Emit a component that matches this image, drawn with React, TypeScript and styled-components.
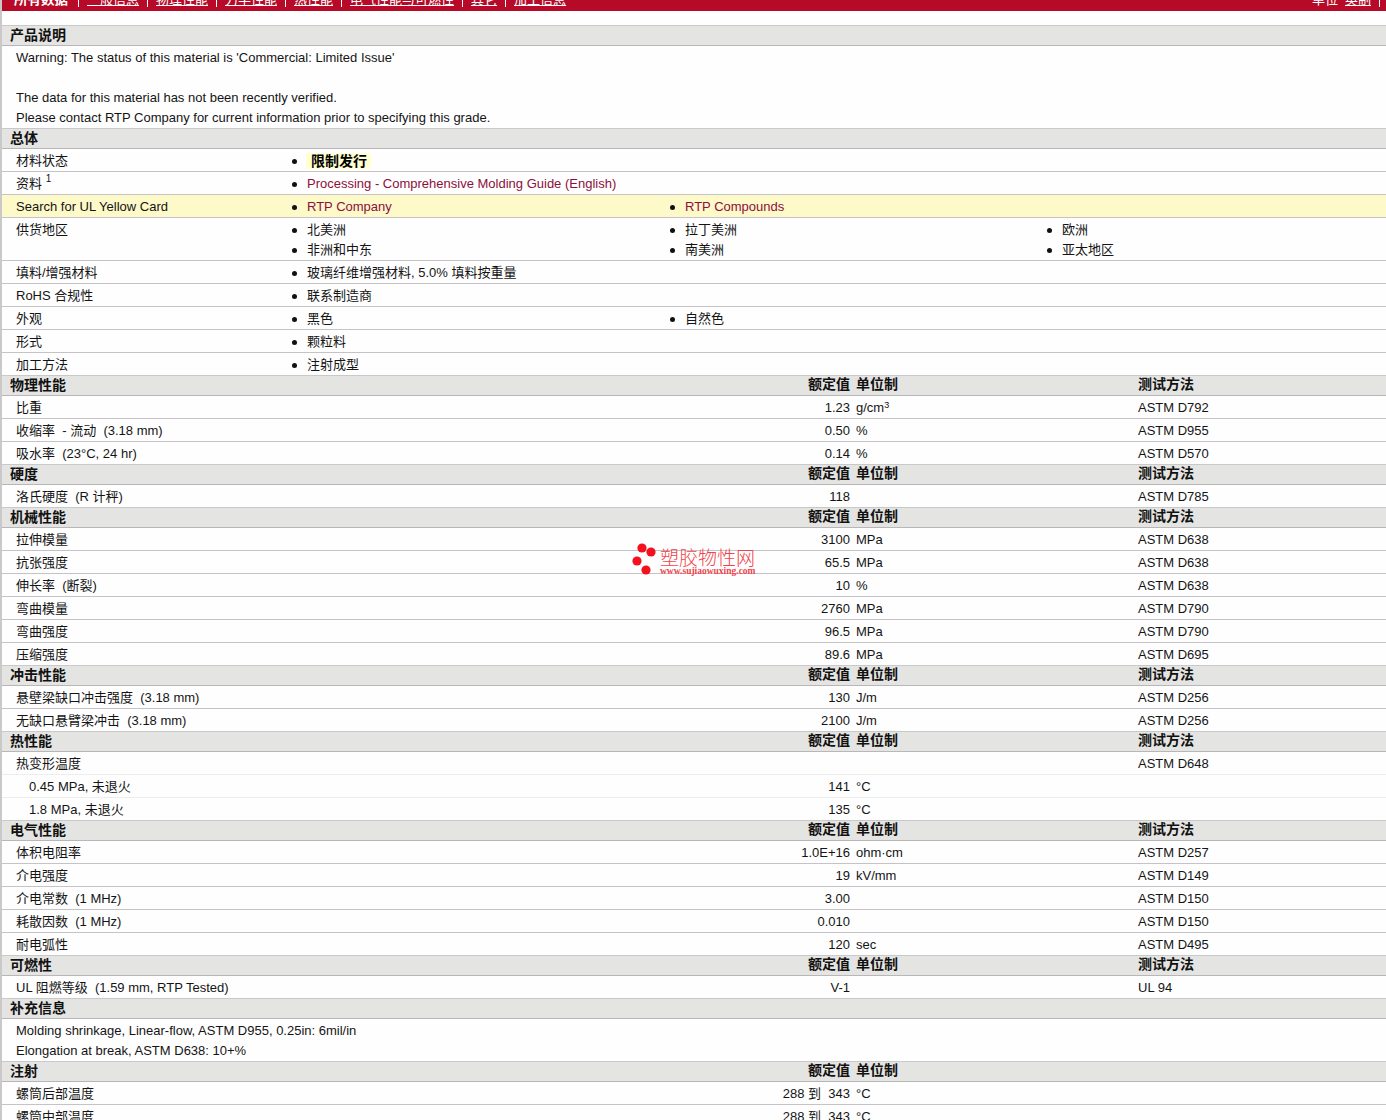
import React from "react";
import styled, { createGlobalStyle } from "styled-components";

const Global = createGlobalStyle`
  html, body { margin: 0; padding: 0; background: #fefefe; }
  body { font-family: "Liberation Sans", "Noto Sans CJK SC", sans-serif; font-size: 13px; color: #141414; overflow: hidden; }
`;

const Page = styled.div`
  width: 1386px;
  height: 1120px;
  overflow: hidden;
  position: relative;
  box-sizing: border-box;
  border-left: 2px solid #c9c9c9;
`;
const TopBar = styled.nav`
  height: 11px;
  background: #b70a28;
  color: #fff;
  display: flex;
  justify-content: space-between;
  align-items: flex-end;
  overflow: hidden;
  padding: 0 0 0 12px;
`;
const NavGroup = styled.div`
  display: flex;
  align-items: center;
  flex: none;
  height: 14px;
  line-height: 14px;
  padding-bottom: 4px;
`;
const NavAll = styled.b`
  font-size: 13.5px;
`;
const NavLink = styled.span`
  text-decoration: underline;
  white-space: nowrap;
`;
const NavUnitLink = styled(NavLink)`
  margin-left: 7px;
`;
const NavPlain = styled.span`
  white-space: nowrap;
`;
const NavSep = styled.i<{ $first?: boolean; $end?: boolean }>`
  display: block;
  width: 1px;
  height: 14px;
  background: #fff;
  margin: 0 ${(p) => (p.$end ? 6 : 8)}px 0 ${(p) => (p.$first ? 10 : 8)}px;
`;
const Spacer = styled.div`
  height: 14px;
`;
const Section = styled.div`
  height: 19px;
  background: #e4e4e2;
  border-top: 1px solid #c9c9c9;
  border-bottom: 1px solid #b9b6b8;
  display: grid;
  grid-template-columns: 840px 276px 1fr;
  column-gap: 6px;
  padding-left: 8px;
  font-size: 14px;
  font-weight: 700;
  line-height: 18px;
  color: #111;
`;
const PlainSection = styled(Section)`
  display: block;
`;
const HeadCols = styled.span`
  display: flex;
  justify-content: space-between;
`;
const HeadVal = styled.span`
  line-height: 16px;
`;
const Notes = styled.div`
  padding: 2px 14px 0;
  line-height: 20px;
`;
const NoteLine = styled.div`
  height: 20px;
`;
const Row = styled.div<{ $light?: boolean; $last?: boolean }>`
  display: grid;
  grid-template-columns: 834px 276px 1fr;
  column-gap: 6px;
  padding: 2px 0 0 14px;
  height: 20px;
  line-height: 20px;
  white-space: pre;
  border-bottom: ${(p) => (p.$last ? "none" : `1px solid ${p.$light ? "#ededed" : "#c6c3c8"}`)};
`;
const Val = styled.span`
  display: flex;
  justify-content: space-between;
`;
const ValLabel = styled.span<{ $indent?: boolean }>`
  padding-left: ${(p) => (p.$indent ? 13 : 0)}px;
`;
const Sup = styled.sup`
  font-size: 10px;
  line-height: 0;
  vertical-align: 6px;
`;
const UnitSup = styled(Sup)`
  font-size: 9px;
  vertical-align: 4px;
`;
const ListRow = styled.div<{ $last?: boolean; $hl?: boolean; $lines?: number }>`
  display: grid;
  grid-template-columns: 276px 378px 377px 1fr;
  grid-auto-rows: 20px;
  padding: 2px 0 0 14px;
  height: ${(p) => (p.$lines || 1) * 20}px;
  line-height: 20px;
  white-space: nowrap;
  background: ${(p) => (p.$hl ? "#fdf9c9" : "transparent")};
  border-bottom: ${(p) => (p.$last ? "none" : "1px solid #c6c3c8")};
`;
const ListLabel = styled.span`
  grid-row: 1 / span 2;
`;
const Item = styled.span<{ $col?: number }>`
  display: flex;
  align-items: center;
  ${(p) => (p.$col ? `grid-row: 2; grid-column: ${p.$col};` : "")}
  &::before {
    content: "";
    width: 5px;
    height: 5px;
    border-radius: 50%;
    background: #111;
    margin-right: 10px;
    flex: none;
  }
`;
const RedLink = styled.span`
  color: #8c0f3c;
`;
const Badge = styled.b`
  background: #ffffd0;
  padding: 0 4px 0 5px;
  margin-left: -1px;
  font-size: 14px;
  line-height: 16px;
  color: #000;
`;
const Mark = styled.div`
  position: absolute;
  left: 627px;
  top: 541px;
  width: 132px;
  height: 36px;
  display: flex;
  pointer-events: none;
`;
const MarkDots = styled.svg`
  width: 31px;
  height: 36px;
  flex: none;
`;
const MarkText = styled.div`
  display: flex;
  flex-direction: column;
  color: #f0444c;
`;
const MarkCn = styled.span`
  font-family: "Noto Sans CJK SC", sans-serif;
  font-weight: 300;
  font-size: 19px;
  line-height: 19px;
  margin-top: 6px;
  white-space: nowrap;
`;
const MarkUrl = styled.span`
  font-family: "Liberation Serif", serif;
  font-weight: 700;
  font-size: 9.5px;
  line-height: 8px;
  margin-top: 1px;
  white-space: nowrap;
`;

type V = { l: React.ReactNode; v?: string; u?: React.ReactNode; t?: string; ind?: boolean; light?: boolean };
const S = (title: string, rows: V[]) => ({ title, rows });

const data = [
  S("物理性能", [
    { l: "比重", v: "1.23", u: <>g/cm<UnitSup>3</UnitSup></>, t: "ASTM D792" },
    { l: "收缩率  - 流动  (3.18 mm)", v: "0.50", u: "%", t: "ASTM D955" },
    { l: "吸水率  (23°C, 24 hr)", v: "0.14", u: "%", t: "ASTM D570" },
  ]),
  S("硬度", [{ l: "洛氏硬度  (R 计秤)", v: "118", t: "ASTM D785" }]),
  S("机械性能", [
    { l: "拉伸模量", v: "3100", u: "MPa", t: "ASTM D638" },
    { l: "抗张强度", v: "65.5", u: "MPa", t: "ASTM D638" },
    { l: "伸长率  (断裂)", v: "10", u: "%", t: "ASTM D638" },
    { l: "弯曲模量", v: "2760", u: "MPa", t: "ASTM D790" },
    { l: "弯曲强度", v: "96.5", u: "MPa", t: "ASTM D790" },
    { l: "压缩强度", v: "89.6", u: "MPa", t: "ASTM D695" },
  ]),
  S("冲击性能", [
    { l: "悬壁梁缺口冲击强度  (3.18 mm)", v: "130", u: "J/m", t: "ASTM D256" },
    { l: "无缺口悬臂梁冲击  (3.18 mm)", v: "2100", u: "J/m", t: "ASTM D256" },
  ]),
  S("热性能", [
    { l: "热变形温度", t: "ASTM D648", light: true },
    { l: "0.45 MPa, 未退火", v: "141", u: "°C", ind: true, light: true },
    { l: "1.8 MPa, 未退火", v: "135", u: "°C", ind: true },
  ]),
  S("电气性能", [
    { l: "体积电阻率", v: "1.0E+16", u: "ohm·cm", t: "ASTM D257" },
    { l: "介电强度", v: "19", u: "kV/mm", t: "ASTM D149" },
    { l: "介电常数  (1 MHz)", v: "3.00", t: "ASTM D150" },
    { l: "耗散因数  (1 MHz)", v: "0.010", t: "ASTM D150" },
    { l: "耐电弧性", v: "120", u: "sec", t: "ASTM D495" },
  ]),
  S("可燃性", [{ l: "UL 阻燃等级  (1.59 mm, RTP Tested)", v: "V-1", t: "UL 94" }]),
];

const general: { l: React.ReactNode; items: React.ReactNode[]; hl?: boolean; lines?: number }[] = [
  { l: "材料状态", items: [<Badge>限制发行</Badge>] },
  { l: <>资料 <Sup>1</Sup></>, items: [<RedLink>Processing - Comprehensive Molding Guide (English)</RedLink>] },
  { l: "Search for UL Yellow Card", items: [<RedLink>RTP Company</RedLink>, <RedLink>RTP Compounds</RedLink>], hl: true },
  { l: "供货地区", items: ["北美洲", "拉丁美洲", "欧洲", "非洲和中东", "南美洲", "亚太地区"], lines: 2 },
  { l: "填料/增强材料", items: ["玻璃纤维增强材料, 5.0% 填料按重量"] },
  { l: "RoHS 合规性", items: ["联系制造商"] },
  { l: "外观", items: ["黑色", "自然色"] },
  { l: "形式", items: ["颗粒料"] },
  { l: "加工方法", items: ["注射成型"] },
];

const navItems = ["一般信息", "物理性能", "力学性能", "热性能", "电气性能与可燃性", "其它", "加工信息"];

const Head = ({ title, test = true }: { title: string; test?: boolean }) => (
  <Section>
    <HeadCols>
      <span>{title}</span>
      <HeadVal>额定值</HeadVal>
    </HeadCols>
    <HeadVal>单位制</HeadVal>
    <HeadVal>{test ? "测试方法" : ""}</HeadVal>
  </Section>
);

const Line = ({ r, last }: { r: V; last: boolean }) => (
  <Row $last={last} $light={r.light}>
    <Val>
      <ValLabel $indent={r.ind}>{r.l}</ValLabel>
      <span>{r.v}</span>
    </Val>
    <span>{r.u}</span>
    <span>{r.t}</span>
  </Row>
);

export default function App() {
  return (
    <Page>
      <Global />
      <TopBar>
        <NavGroup>
          <NavAll>所有数据</NavAll>
          {navItems.map((n, i) => (
            <React.Fragment key={n}>
              <NavSep $first={i === 0} />
              <NavLink>{n}</NavLink>
            </React.Fragment>
          ))}
        </NavGroup>
        <NavGroup>
          <NavPlain>单位</NavPlain>
          <NavUnitLink>英制</NavUnitLink>
          <NavSep $end />
        </NavGroup>
      </TopBar>
      <Spacer />
      <PlainSection>产品说明</PlainSection>
      <Notes>
        <NoteLine>Warning: The status of this material is 'Commercial: Limited Issue'</NoteLine>
        <NoteLine />
        <NoteLine>The data for this material has not been recently verified.</NoteLine>
        <NoteLine>Please contact RTP Company for current information prior to specifying this grade.</NoteLine>
      </Notes>
      <PlainSection>总体</PlainSection>
      {general.map((g, i) => (
        <ListRow key={i} $hl={g.hl} $lines={g.lines} $last={i === general.length - 1}>
          <ListLabel>{g.l}</ListLabel>
          {g.items.map((it, j) => (
            <Item key={j} $col={j >= 3 ? j - 1 : undefined}>
              {it}
            </Item>
          ))}
        </ListRow>
      ))}
      {data.map((s) => (
        <React.Fragment key={s.title}>
          <Head title={s.title} />
          {s.rows.map((r, i) => (
            <Line key={i} r={r} last={i === s.rows.length - 1} />
          ))}
        </React.Fragment>
      ))}
      <PlainSection>补充信息</PlainSection>
      <Notes>
        <NoteLine>Molding shrinkage, Linear-flow, ASTM D955, 0.25in: 6mil/in</NoteLine>
        <NoteLine>Elongation at break, ASTM D638: 10+%</NoteLine>
      </Notes>
      <Head title="注射" test={false} />
      <Line r={{ l: "螺筒后部温度", v: "288 到  343", u: "°C" }} last={false} />
      <Line r={{ l: "螺筒中部温度", v: "288 到  343", u: "°C" }} last={false} />
      <Mark>
        <MarkDots viewBox="0 0 31 36">
          <circle cx="13" cy="7" r="4.6" fill="#f4101c" />
          <circle cx="22" cy="11" r="4.6" fill="#f4101c" />
          <circle cx="8" cy="20" r="4.6" fill="#f4101c" />
          <circle cx="17" cy="29" r="4.6" fill="#f4101c" />
        </MarkDots>
        <MarkText>
          <MarkCn>塑胶物性网</MarkCn>
          <MarkUrl>www.sujiaowuxing.com</MarkUrl>
        </MarkText>
      </Mark>
    </Page>
  );
}
